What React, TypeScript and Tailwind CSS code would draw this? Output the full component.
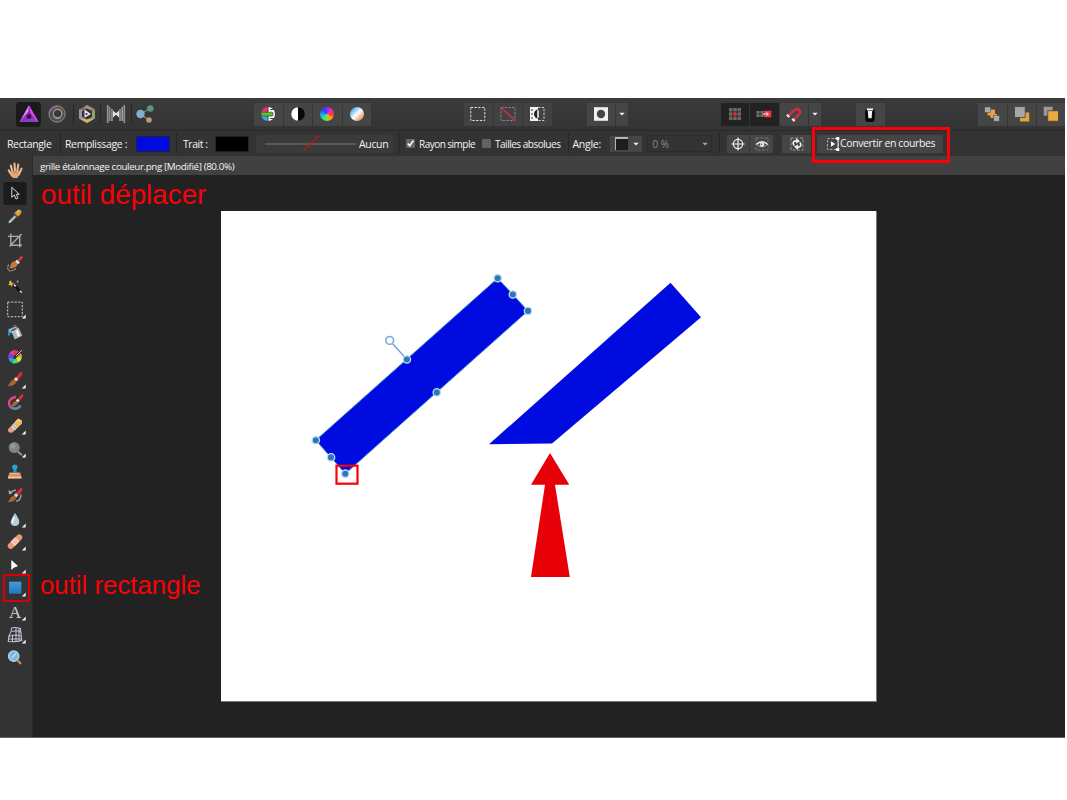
import React from 'react';

// Small white triangle that marks a tool with a flyout menu
const Corner = () => <path d="M10.7 5V9H6.8Z" fill="#f2f2f2" />;

interface ToolProps {
  children: React.ReactNode;
  active?: boolean;
  flyout?: boolean;
}

// Origin of the drawing is the centre of the icon
const Tool: React.FC<ToolProps> = ({ children, active, flyout }) => (
  <button className="block h-[23.2px] w-[32px] shrink-0">
    <svg width="32" height="23.2" viewBox="-15 -11.6 32 23.2">
      {active && <rect x="-11.5" y="-11.6" width="23" height="23.2" rx="2.5" fill="#1b1b1b" />}
      {children}
      {flyout && <Corner />}
    </svg>
  </button>
);

interface CellProps {
  children: React.ReactNode;
  className?: string;
}

const Cell: React.FC<CellProps> = ({ children, className = 'h-[23px] w-[28.5px] bg-[#454545]' }) => (
  <button className={`flex shrink-0 items-center justify-center ${className}`}>
    <svg width="20" height="20" viewBox="-10 -10 20 20" className="shrink-0">{children}</svg>
  </button>
);

const Arrow = () => <path d="M-2.7 -1.3H2.7L0 1.6Z" fill="#f0f0f0" />;

const Divider = () => <div className="h-[21px] w-px shrink-0 bg-[#272727]" />;

const Personas = () => (
  <div className="flex h-[25px] w-[238px] shrink-0 items-center">
    <Cell className="h-[25px] w-[25px] rounded-sm bg-[#1a1a1a]">
      <path d="M0 -8.7L9.5 8H-9.5Z" fill="#a52fd0" />
      <path d="M0 -8.7L9.5 8L5.5 5.5L1 -3Z" fill="#d44be6" />
      <path d="M9.5 8H-9.5L-5 4.8H4Z" fill="#8a3fd0" />
      <path d="M0 -8.7L-9.5 8L-6 3L0 -3Z" fill="#e08bf5" />
      <circle cx="0" cy="2.4" r="2.5" fill="#351047" />
      <path d="M-3 2L1 -1M3 2L1 5M-6 7L-1 4M6 5L2 2M0 -6V0" fill="none" stroke="#6d1d91" strokeWidth=".8" />
    </Cell>
    <Cell className="h-[23px] w-[32px]">
      <circle cx="0" cy="0" r="8" fill="none" stroke="#867d78" strokeWidth="1.3" />
      <circle cx="0" cy="0" r="6.2" fill="none" stroke="#5c625a" strokeWidth="1.1" />
      <circle cx="0.6" cy="-.5" r="4.3" fill="none" stroke="#a5957d" strokeWidth="1.4" />
      <path d="M-7.5 -1A7.5 7.5 0 0 1 0 -7.5" fill="none" stroke="#887499" strokeWidth="1.3" />
      <path d="M-4 1A4.3 4.3 0 0 0 4 2.5" fill="none" stroke="#6b98a7" strokeWidth="1.2" />
    </Cell>
    <Divider />
    <Cell className="h-[23px] w-[26px]">
      <path d="M0 -9L8 -4.5V4.5L0 9L-8 4.5V-4.5Z" fill="#77736a" />
      <path d="M0 -9L8 -4.5L3 -4L-3 -6Z" fill="#a88c88" />
      <path d="M-8 -4.5V4.5L-3 4L-4 -4Z" fill="#9b93b2" />
      <path d="M8 -4.5V4.5L4 5V-2Z" fill="#92a269" />
      <path d="M-8 4.5L0 9L7 5L0 4.5Z" fill="#d5b06e" />
      <path d="M0 -5.5L5 -2.7V2.8L0 5.5L-5 2.8V-2.7Z" fill="#303236" />
      <path d="M-2.5 -4.5L4 0L-2.5 3.8Z" fill="#e4e6ea" />
      <circle cx="-.5" cy="0" r="1.1" fill="#303236" />
    </Cell>
    <Divider />
    <Cell className="h-[23px] w-[30px]">
      <path d="M-8.3 -9V9" stroke="#a88d91" strokeWidth="1.7" />
      <path d="M-6.2 -7V7" stroke="#848dac" strokeWidth="1.5" />
      <path d="M-4 -5V7" stroke="#b2a591" strokeWidth="1.4" />
      <path d="M8.3 -9V9" stroke="#9b8a9e" strokeWidth="1.7" />
      <path d="M6.2 -7V7" stroke="#a4aa93" strokeWidth="1.5" />
      <path d="M4 -5V7" stroke="#98a5aa" strokeWidth="1.4" />
      <path d="M-3 -3.5L0 -.8L3 -3.5V3.5L0 .8L-3 3.5Z" fill="#e4e4e4" />
    </Cell>
    <Divider />
    <Cell className="h-[23px] w-[26px]">
      <path d="M5 -5.5L-4.5 0L3.8 6" fill="none" stroke="#748894" strokeWidth="1.2" />
      <circle cx="-4.5" cy="0" r="4.2" fill="#85aec9" />
      <circle cx="5.3" cy="-5.5" r="3.2" fill="#609582" />
      <circle cx="4" cy="6" r="2.8" fill="#b79b78" />
    </Cell>
  </div>
);

const MainToolbar = () => (
  <div className="flex h-[33px] shrink-0 items-center border-b border-[#292929] bg-gradient-to-b from-[#3b3b3b] to-[#333333] pl-4">
    <Personas />
    <div className="flex w-[210px] shrink-0 gap-px">
      <Cell>
        <path d="M0 0V-7A7 7 0 0 0 -7 0Z" fill="#ee3264" />
        <path d="M0 0V-7A7 7 0 0 1 7 0Z" fill="#fff" />
        <path d="M0 0V7A7 7 0 0 1 -7 0Z" fill="#32aee5" />
        <path d="M0 0V7A7 7 0 0 0 7 0Z" fill="#fff" />
        <rect x="-7" y="-1.8" width="12" height="3.8" rx="1" fill="#58c728" stroke="#454545" strokeWidth=".8" />
        <path d="M0 -7V-2M0 2V7M2 -4.5H7M2 4.5H7" stroke="#454545" strokeWidth="1" />
      </Cell>
      <Cell>
        <circle r="6.8" fill="#090909" />
        <path d="M0 -6.8A6.8 6.8 0 0 0 0 6.8Z" fill="#fff" />
      </Cell>
      <button className="flex h-[23px] w-[28.5px] shrink-0 items-center justify-center bg-[#454545]">
        <div className="h-[14px] w-[14px] rounded-full bg-[conic-gradient(#6b35ff,#f32eb8_50deg,#ff352f_95deg,#ff9e24_135deg,#65ed31_190deg,#25dc9f_230deg,#1d9df2_270deg,#333cff_315deg,#6b35ff)]" />
      </button>
      <Cell>
        <defs>
          <linearGradient id="balance" x1="0" y1="0" x2="1" y2="1">
            <stop offset="0.15" stopColor="#4aa9e5" />
            <stop offset="0.5" stopColor="#ffffff" />
            <stop offset="0.9" stopColor="#dd8444" />
          </linearGradient>
        </defs>
        <circle r="7" fill="url(#balance)" />
      </Cell>
    </div>
    <div className="flex w-[123px] shrink-0 gap-px">
      <Cell className="h-[23px] w-[28.5px] bg-[#414141]">
        <rect x="-7.2" y="-6.5" width="14" height="13" fill="none" stroke="#ddd" strokeDasharray="2.4 1.3" />
      </Cell>
      <Cell className="h-[23px] w-[28px] bg-[#414141]">
        <rect x="-7" y="-6.5" width="14" height="13" fill="none" stroke="#888" strokeDasharray="2.4 1.3" />
        <path d="M-7 -6.5L7 6.5" stroke="#d22f3e" strokeWidth="1.5" />
      </Cell>
      <Cell className="h-[23px] w-[29px] bg-[#414141]">
        <rect x="-7" y="-7" width="8" height="14" fill="#f2f2f2" />
        <path d="M1 -6.5H7V6.5H1" fill="none" stroke="#ccc" strokeDasharray="2.4 1.3" />
        <path d="M-5 -5V6" stroke="#333" strokeDasharray="2 2" />
        <path d="M1.5 -4.5A4.5 4.5 0 0 0 1.5 4.5Z" fill="#222" />
        <path d="M1 -3.8V3.8" stroke="#fff" strokeWidth="1.5" />
      </Cell>
    </div>
    <div className="flex w-[134px] shrink-0 gap-px">
      <Cell className="h-[23px] w-[27.5px] bg-[#454545]">
        <rect x="-7" y="-6.8" width="14" height="13.6" fill="#f0f0f0" />
        <circle r="4.2" fill="#444" />
      </Cell>
      <Cell className="h-[23px] w-[12px] bg-[#454545]"><Arrow /></Cell>
    </div>
    <div className="flex w-[135px] shrink-0 gap-px">
      <Cell className="h-[23px] w-[28px] bg-[#222222]">
        <path d="M-6 -6H-2.5V-2.5H-6ZM-1.8 -6H1.8V-2.5H-1.8ZM2.5 -6H6V-2.5H2.5ZM-6 -1.8H-2.5V1.8H-6ZM2.5 -1.8H6V1.8H2.5ZM-6 2.5H-2.5V6H-6ZM-1.8 2.5H1.8V6H-1.8ZM2.5 2.5H6V6H2.5Z" fill="#686868" />
        <circle r="2" fill="#e52b35" />
      </Cell>
      <Cell className="h-[23px] w-[28.5px] bg-[#222222]">
        <path d="M-7.5 -3H-.5V3H-7.5Z" fill="#777" />
        <path d="M-7.5 0H0M-4 -3V3" stroke="#333" />
        <rect x="0" y="-3.3" width="7.3" height="6.6" fill="#ed3640" />
        <path d="M-1.5 0H4M2.3 -1.5L4.5 0L2.3 1.5" fill="none" stroke="#eee" />
      </Cell>
      <Cell className="h-[23px] w-[28px] bg-[#454545]">
        <path d="M-6 2L0.5 -4C4.5 -7 8 -2 4.5 .8L-.5 6" fill="none" stroke="#c92e46" strokeWidth="2.8" />
        <path d="M-7 .8L-4.8 3M-1.7 4.8L.6 7.1" stroke="#eee" strokeWidth="2.2" />
      </Cell>
      <Cell className="h-[23px] w-[12px] bg-[#454545]"><Arrow /></Cell>
    </div>
    <div className="flex w-[122px] shrink-0">
      <Cell>
        <path d="M-5 -2L-3.7 -5H3.7L5 -2L4.5 7L2.5 8H-2.5L-4.5 7Z" fill="#080808" />
        <path d="M-3.4 -5.5H3.4L2.7 -3.6H-2.7Z" fill="#fff" />
        <path d="M-2.2 -3H2.2L1.6 4.3H-1.6Z" fill="#f3f3f3" />
      </Cell>
    </div>
    <div className="flex shrink-0 gap-px">
      <Cell>
        <path d="M-4.5 -4.5H3V0H5V4H-1.5V1.5H-4.5Z" fill="#e5a33b" />
        <rect x="-7.3" y="-7" width="6" height="5.5" fill="#aaa" stroke="#454545" strokeWidth=".5" />
        <rect x="1.7" y="1.7" width="5.7" height="5.5" fill="#aaa" stroke="#454545" strokeWidth=".5" />
      </Cell>
      <Cell>
        <rect x="-2" y="-1.5" width="9.2" height="9" fill="#e5a33b" />
        <rect x="-7.5" y="-7.3" width="10.7" height="10.7" fill="#a6a6a6" stroke="#454545" strokeWidth=".8" />
      </Cell>
      <Cell className="h-[23px] w-[28px] bg-[#454545]">
        <rect x="-7.3" y="-7.3" width="9" height="9" fill="#999" />
        <rect x="-3.2" y="-3.2" width="10.6" height="10.4" fill="#eaaa3f" stroke="#454545" strokeWidth=".8" />
      </Cell>
    </div>
  </div>
);

const ContextToolbar = () => (
  <div className="flex h-[25px] shrink-0 items-center bg-[#333333] pl-[7px] text-[10.5px] leading-none whitespace-nowrap text-[#f4f4f4]">
    <span className="w-[53px] shrink-0 pt-px tracking-[-0.36px]">Rectangle</span>
    <Divider />
    <span className="w-[75px] shrink-0 pt-px pl-1 tracking-[-0.36px]">Remplissage :</span>
    <div className="h-[16px] w-[34px] shrink-0 rounded-[2px] border border-[#202040] bg-[#000be0]" />
    <div className="w-[6px] shrink-0" />
    <Divider />
    <span className="w-[38px] shrink-0 pt-px pl-[6px] tracking-[-0.45px]">Trait :</span>
    <div className="h-[16px] w-[34px] shrink-0 rounded-[2px] border border-[#222] bg-black" />
    <div className="ml-[7px] flex h-[18px] w-[137px] shrink-0 items-center rounded-[2px] bg-[#3a3a3a] pl-2">
      <svg width="93" height="18" viewBox="0 0 93 18" className="shrink-0">
        <path d="M1 9H92" stroke="#777" />
        <path d="M39 16L55 1" stroke="#bd171d" strokeWidth="1.3" />
      </svg>
      <span className="pt-px pl-[2px] tracking-[-0.35px]">Aucun</span>
    </div>
    <div className="w-[6px] shrink-0" />
    <Divider />
    <svg width="9" height="9" viewBox="0 0 9 9" className="ml-[6px] shrink-0">
      <rect width="9" height="9" rx="1" fill="#666" />
      <path d="M1.7 4.5L3.7 6.7L7.4 1.6" fill="none" stroke="#fff" strokeWidth="1.6" />
    </svg>
    <span className="w-[66.5px] shrink-0 pt-px pl-1 text-[10px] tracking-[-0.52px]">Rayon simple</span>
    <div className="h-[9px] w-[9px] shrink-0 rounded-[1px] bg-[#626262]" />
    <span className="w-[77px] shrink-0 pt-px pl-[4.5px] text-[10px] tracking-[-0.48px]">Tailles absolues</span>
    <Divider />
    <span className="w-[41px] shrink-0 pt-px pl-1 tracking-[-0.28px]">Angle:</span>
    <div className="flex h-[16px] w-[32px] shrink-0 items-center bg-[#454545] pl-[5px]">
      <div className="h-[13px] w-[13px] border-t-2 border-l border-[#b5b5b5] bg-[#1d1d1d]" />
      <svg width="12" height="8" viewBox="-6 -4 12 8" className="ml-[2px]"><Arrow /></svg>
    </div>
    <div className="ml-[5px] flex h-[17px] w-[65px] shrink-0 items-center justify-between border border-[#2b2b2b] pr-[2px] pl-[5px] text-[10px] text-[#8b8b8b]">
      <span className="pt-px">0 %</span>
      <svg width="8" height="8" viewBox="-4 -4 8 8" className="opacity-60"><Arrow /></svg>
    </div>
    <div className="w-[7px] shrink-0" />
    <Divider />
    <div className="ml-[7px] flex shrink-0 gap-px">
      <Cell className="h-[18px] w-[22.5px] bg-[#454545]">
        <circle r="4.6" fill="none" stroke="#f2f2f2" strokeWidth="1.2" />
        <path d="M0 -6.5V6.5M-6.5 0H6.5" stroke="#f2f2f2" strokeWidth="1.2" />
      </Cell>
      <Cell className="h-[18px] w-[23px] bg-[#454545]">
        <path d="M-6 -6H6V6H-6Z" fill="none" stroke="#777" strokeDasharray="3 1.5" />
        <path d="M-5.7 .5Q0 -5 5.7 .5" fill="none" stroke="#eee" strokeWidth="1.4" />
        <path d="M-4.7 1Q0 5 4.7 1" fill="none" stroke="#aaa" />
        <circle cy=".6" r="2.1" fill="#fff" />
        <circle cx="-.5" cy=".2" r=".8" fill="#333" />
      </Cell>
    </div>
    <Cell className="ml-[9px] h-[18px] w-[29px] bg-[#454545]">
      <path d="M-6 -6H6V6H-6Z" fill="none" stroke="#999" strokeDasharray="3 1.5" />
      <path d="M-3 1.6Q-5.5 -2.7 -.5 -3.3M3 -1.6Q5.5 2.7 .5 3.3" fill="none" stroke="#f0f0f0" strokeWidth="1.7" />
      <path d="M-1 -6V-.5L3 -2.7ZM1 6V.5L-3 2.7Z" fill="#f0f0f0" />
    </Cell>
    <button className="ml-[6px] flex h-[18px] w-[126px] shrink-0 items-center rounded-[1px] bg-[#454545] pl-[9px]">
      <svg width="14" height="16" viewBox="0 0 14 16" className="shrink-0">
        <path d="M1.5 2.5H12.5V13.5H1.5Z" fill="none" stroke="#aaa" strokeDasharray="2.5 1.5" />
        <path d="M9 2.5H12V13.5H9" fill="none" stroke="#eee" />
        <path d="M10.3 1H13.3V4H10.3ZM10.3 12H13.3V15H10.3ZM5 5.3L9.2 8L5 10.7Z" fill="#fff" />
      </svg>
      <span className="tracking-[-0.38px]">Convertir en courbes</span>
    </button>
  </div>
);

const Brush = () => (
  <>
    <path d="M-1 0L5.5 -7.5L7.5 -7L7 -4.5L1.5 2Z" fill="#d92d32" />
    <path d="M-1 -.5L1 -2.5L3.2 -.2L1 2Z" fill="#d9dde0" />
    <path d="M-7.5 6.5C-5 5 -5 1 -1 0L1.4 2.4C0 5 -3 7 -7.5 6.5Z" fill="#a9652e" />
  </>
);

const ToolsPanel = () => (
  <div className="flex w-[33px] shrink-0 flex-col border-r border-[#292929] bg-[#333333] pt-[3px]">
    {/* Hand */}
    <Tool>
      <path d="M-3 5L-6.3 -.2M-2.5 1L-4.2 -5M0 0L-.5 -7M2.2 1L3.3 -6M3.8 4L6.5 -2" fill="none" stroke="#eab88f" strokeWidth="2.1" strokeLinecap="round" />
      <path d="M-4 1.5L4.5 .5L4 4L2.5 7.5H-2L-4 4Z" fill="#e2a87d" />
      <path d="M-2 3Q1 1 3 3" fill="none" stroke="#b57c59" strokeWidth=".7" />
    </Tool>
    {/* Move */}
    <Tool active>
      <path d="M-3.2 -6.3V3.7L-.7 1.4L1 5.4L3 4.4L1.3 .7H4.3Z" fill="#1b1b1b" stroke="#d8d8d8" />
    </Tool>
    {/* Colour picker */}
    <Tool>
      <path d="M-5.5 5.5L1 -1" stroke="#aac0c9" strokeWidth="2.4" />
      <path d="M-6.5 6.5L-4.5 4.5" stroke="#e3edf0" />
      <path d="M-1.5 -3.5L3 1" stroke="#55463a" strokeWidth="2" />
      <path d="M-.5 -3.8L3 -6.8Q6 -7.8 6.6 -4.5Q6 -1.5 2.5 -.1Z" fill="#d99e37" />
      <path d="M2 -4.5L4.5 -6" stroke="#f7d474" />
    </Tool>
    {/* Crop */}
    <Tool>
      <path d="M-4.2 -7V4.7H7M-7 -4.2H4.7V7M-5.5 6L6.5 -6.5" fill="none" stroke="#aaa" strokeWidth="1.4" />
    </Tool>
    {/* Selection brush */}
    <Tool>
      <g transform="translate(1 -1)">
        <path d="M2 -3L5.5 -7L7.3 -5L3.5 -1Z" fill="#d93445" />
        <path d="M1 -3L4 0L1.5 2L-1 -1Z" fill="#e4e0dc" />
        <path d="M-6 6Q-6 -1 -1 -1.7L1.7 1.7Q0 6 -6 6Z" fill="#c77834" />
      </g>
      <path d="M-6.5 1Q-8 5 -6.3 7Q-3 8 1 5" fill="none" stroke="#c8c8c8" strokeDasharray="2 1" />
    </Tool>
    {/* Flood select */}
    <Tool>
      <path d="M-1 -1.5L6.5 6" stroke="#111" strokeWidth="2.7" />
      <path d="M-1 -2L.8 -.2M5 4.3L6.8 6.1" stroke="#d9d9d9" strokeWidth="1.6" />
      <path d="M-4 -6L-3.1 -3.8L-.8 -3.2L-2.8 -2L-3 .5L-4.6 -1.5L-7 -1.4L-5.5 -3.3L-6 -5Z" fill="#e3b633" />
      <circle cx="2.6" cy="-5" r="1" fill="#d9ac3a" />
    </Tool>
    {/* Marquee */}
    <Tool flyout>
      <rect x="-7.3" y="-7.5" width="14.6" height="14.6" fill="none" stroke="#ccc" strokeDasharray="2.2 1.3" />
    </Tool>
    {/* Flood fill */}
    <Tool>
      <path d="M-7 3V-3Q-6 -5 -2 -4.2L-4 -1Q-4.5 4 -7 3Z" fill="#288dcf" />
      <path d="M-4 -1.8L3.5 -5L7.3 3.2L-.3 7Z" fill="#adb6ba" />
      <path d="M1 -3.8L4 3.8" stroke="#edf3f4" strokeWidth="2.6" />
      <ellipse cx="-.2" cy="-3.2" rx="4" ry="1.6" transform="rotate(-24)" fill="#576166" stroke="#d0d6d8" />
      <path d="M-2 -4Q-2 -8 1 -7L2 -3" fill="none" stroke="#888" />
    </Tool>
    {/* Gradient */}
    <Tool>
      <path d="M0 0L-6 -3A7 7 0 0 1 -1 -6.5Z" fill="#e63caa" />
      <path d="M0 0L-1 -6.5A7 7 0 0 1 4 -5Z" fill="#ed3b33" />
      <path d="M0 0L4 -5A7 7 0 0 1 7 1Z" fill="#eba13b" />
      <path d="M0 0L7 1A7 7 0 0 1 3 6Z" fill="#d6e837" />
      <path d="M0 0L3 6A7 7 0 0 1 -3 6.3Z" fill="#3ce274" />
      <path d="M0 0L-3 6.3A7 7 0 0 1 -6.6 2Z" fill="#3a9be8" />
      <path d="M0 0L-6.6 2A7 7 0 0 1 -6 -3Z" fill="#793df0" />
      <path d="M-.5 1L6.5 -6" stroke="#272727" strokeWidth="2.6" />
      <path d="M1 -.5L7 -6.5" stroke="#d5d5d5" />
      <circle cx="-.3" cy=".8" r="1.6" fill="#333" />
    </Tool>
    {/* Paint brush */}
    <Tool flyout><Brush /></Tool>
    {/* Paint mixer */}
    <Tool>
      <path d="M1 -5.5Q-4 -5 -5.8 -1Q-7 5 -1 6Q3 7 5.5 3" fill="none" stroke="#db4587" strokeWidth="2.5" />
      <path d="M-4 5Q1 8 5.5 3" fill="none" stroke="#4295bf" strokeWidth="2.2" />
      <g transform="translate(1.7 -1.7) scale(.9)"><Brush /></g>
    </Tool>
    {/* Eraser */}
    <Tool flyout>
      <path d="M-7 4L3 -7L7 -5V-1.8L-2.8 7L-6 6.7Z" fill="#e9b861" />
      <path d="M-4.5 1.3L-1 -2.5L2.6 1.9L-1.3 5.5Z" fill="#b9bab8" />
      <path d="M-7 4L-4.5 1.3L-1.3 5.5L-3 7L-6 6.7Z" fill="#ed9b87" />
      <path d="M-3 1L.5 4M-1 -1L2 2" stroke="#f1f1ed" />
      <path d="M0 -3L3.5 -6.2L6 -4.6" fill="none" stroke="#ffe5a3" />
    </Tool>
    {/* Dodge */}
    <Tool flyout>
      <path d="M2.7 3L7 6.6" stroke="#919494" strokeWidth="2" />
      <circle cx="-.8" cy="-1" r="5.5" fill="#7d8487" />
      <circle cx="-2" cy="-2.5" r="2.6" fill="#929a9d" />
    </Tool>
    {/* Clone stamp */}
    <Tool>
      <path d="M-1.3 -3H1L1.8 1H-2Z" fill="#348cb6" />
      <circle cx="-.2" cy="-4.4" r="2.7" fill="#2d9ed5" />
      <path d="M-5.5 1H5.2L6.5 5.5H-7Z" fill="#d99067" />
      <path d="M-7 5H6.5V7H-7Z" fill="#f0c49d" />
      <path d="M-5 2H4" stroke="#efbc9a" />
    </Tool>
    {/* Undo brush */}
    <Tool>
      <path d="M-5.5 -2Q-3 -5 1 -5.6M6 -1Q6 5 1 5.8" fill="none" stroke="#8cabb9" strokeWidth="1.4" />
      <path d="M-6.5 -5.5L-6 -1.2L-2.3 -2.5Z" fill="#9bb6c2" />
      <Brush />
    </Tool>
    {/* Blur */}
    <Tool flyout>
      <path d="M0 -5.5Q5 1.5 4.3 4.2Q3.2 7.5 0 7.5Q-4 7.5 -4.4 4Q-4.2 1 0 -5.5Z" fill="#b8cbd6" />
      <path d="M-.5 -1.5Q-3 2.5 -2.3 4.5" fill="none" stroke="#f1fbff" strokeWidth="1.5" />
    </Tool>
    {/* Healing */}
    <Tool flyout>
      <g transform="rotate(-45)">
        <rect x="-9" y="-3" width="18" height="6" rx="3" fill="#e79c71" />
        <rect x="-3.2" y="-3" width="6.4" height="6" fill="#f7d4bc" />
        <path d="M-1 -1H-.2M1 1H1.8M-1 1H-.2M1 -1H1.8" stroke="#c8815c" />
      </g>
    </Tool>
    {/* Node */}
    <Tool flyout>
      <path d="M-3.7 -4.5V5.5L-1.2 3.2L3 1.5Z" fill="#fff" />
    </Tool>
    {/* Rectangle */}
    <Tool flyout>
      <defs>
        <linearGradient id="rectFill" x1="0" y1="0" x2="0" y2="1">
          <stop offset="0" stopColor="#459bdc" />
          <stop offset="1" stopColor="#2276bd" />
        </linearGradient>
      </defs>
      <rect x="-6" y="-5.9" width="12.4" height="12" fill="url(#rectFill)" />
    </Tool>
    {/* Text */}
    <Tool flyout>
      <text x="0" y="6" textAnchor="middle" fontSize="17" fill="#cfcfcf" fontFamily="'Liberation Serif', serif">A</text>
    </Tool>
    {/* Mesh warp */}
    <Tool flyout>
      <path d="M-3.3 -6.5Q0 -8 5.5 -6L6.8 6Q2 7.6 -6.8 7L-6 1Q-3.5 -2 -3.3 -6.5ZM-3 -3Q1 -5 6 -2.5M-6 2Q1 -1 6.7 2M1 -7V7M-2.5 0V7M4 -6V7M-6 4.5H6.5" fill="none" stroke="#c3c6d2" strokeWidth="1.05" />
    </Tool>
    {/* Zoom */}
    <Tool>
      <path d="M2.7 3L6 6.3" stroke="#c48a4e" strokeWidth="2.2" />
      <circle cx="-1.3" cy="-1.4" r="5.1" fill="#74b6df" stroke="#b7d4e1" strokeWidth="1.5" />
      <path d="M-3.5 .5L1 -4" stroke="#a9dcf4" strokeWidth="2" />
    </Tool>
  </div>
);

const HANDLES = [
  [497.7, 278.2],
  [512.8, 294.5],
  [528, 310.9],
  [406.9, 359.5],
  [436.8, 392.4],
  [315.8, 440.2],
  [331, 457.4],
  [345.3, 473.7],
];

const Artboard = () => (
  <svg width="656" height="491" viewBox="221 211 655 490" className="block border-r border-b border-[#777] bg-white">
    <path d="M497.7 278.2L528 310.9L345.3 473.7L315.8 440.2Z" fill="#000be0" stroke="#4a8fd0" />
    <path d="M389.7 340.5L406.9 359.5" stroke="#6b9dd1" strokeWidth="1.2" />
    <circle cx="389.7" cy="340.4" r="3.9" fill="#fff" stroke="#7da9d9" strokeWidth="1.6" />
    {HANDLES.map(([x, y]) => (
      <circle key={`${x}-${y}`} cx={x} cy={y} r="3.7" fill="#2878c5" stroke="#c6dce9" strokeWidth="1.3" />
    ))}
    <path d="M670.5 282.7L701 317.3L552 443.5L489 444.3Z" fill="#000be0" />
    <path d="M550 453L569.3 484.8H555L569.8 577H531L545 484.8H531Z" fill="#e80008" />
    <rect x="336.5" y="465.7" width="21" height="18" fill="none" stroke="#fa0008" strokeWidth="2.2" />
  </svg>
);

const App: React.FC = () => {
  return (
    <div className="h-[800px] w-[1067px] overflow-hidden bg-white pt-[98px] font-['Open_Sans','Noto_Sans',sans-serif]">
      <div className="relative flex h-[640px] w-[1065px] flex-col overflow-hidden border-b border-[#656065] bg-[#222222]">
        <MainToolbar />
        <ContextToolbar />
        <div className="flex min-h-0 flex-1">
          <ToolsPanel />
          <div className="flex min-w-0 flex-1 flex-col">
            <div className="flex h-[19px] shrink-0 items-center bg-[#414141] pt-[2px] pl-[7px] text-[9.8px] leading-none whitespace-nowrap text-[#f4f4f4]">
              <span className="tracking-[-0.38px]">grille étalonnage couleur.png [Modifié] (80.0%)</span>
            </div>
            <div className="flex-1 pt-[36px] pl-[188px]">
              <Artboard />
            </div>
          </div>
        </div>

        {/* Red annotations over the interface */}
        <div className="absolute top-[29px] left-[812px] h-[36px] w-[138px] border-3 border-[#fa0008]" />
        <div className="absolute top-[476px] left-[3px] h-[28px] w-[27px] border-2 border-[#d80008]" />
        <p className="absolute top-[81px] left-[41px] font-['Liberation_Sans',sans-serif] text-[27.8px] leading-[32px] whitespace-nowrap text-[#fa0008]">
          outil déplacer
        </p>
        <p className="absolute top-[472px] left-[40px] font-['Liberation_Sans',sans-serif] text-[25.8px] leading-[30px] whitespace-nowrap text-[#fa0008]">
          outil rectangle
        </p>
      </div>
    </div>
  );
};

export default App;
